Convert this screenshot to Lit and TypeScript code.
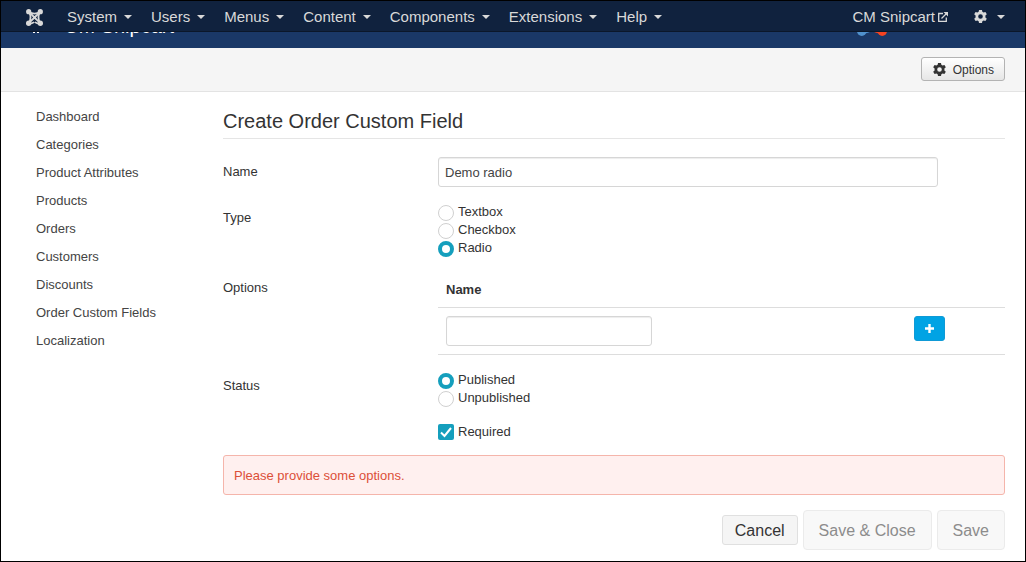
import { LitElement, html, svg, css } from "lit";
import { customElement, state } from "lit/decorators.js";

const GEAR =
  "M6.400 0h3.200l.4 2 1.300.8 2-.7 1.500 2.600-1.500 1.300v2l1.500 1.300-1.500 2.600-2-.7-1.300.8-.4 2H6.400l-.4-2-1.300-.8-2 .7L1.200 9.300 2.700 8V6L1.200 4.700 2.700 2.100l2 .7L6 2zM8 4.500a2.500 2.500 0 1 0 0 5 2.500 2.500 0 0 0 0-5z";

const gear = html`<svg class="gear" viewBox="1 0 14 14" aria-hidden="true">
  <path fill="currentColor" fill-rule="evenodd" d=${GEAR} />
</svg>`;

// Four knobs, one per corner, joined by interlaced links.
const joomla = (tl: string, tr: string, br: string, bl: string) => svg`
  <g fill="none" stroke-width="2.600">
    <path stroke=${tl} d="M4 4Q12 9 20 4M4 4L14 14" />
    <path stroke=${tr} d="M20 4Q15 12 20 20M20 4L10 14" />
    <path stroke=${br} d="M20.500 21Q15 20.500 12.500 18.500M20 20L10 10" />
    <path stroke=${bl} d="M3.500 21Q9 20.500 11.500 18.500M4 20Q9 12 4 4M4 20L14 10" />
  </g>
  <circle cx="3.800" cy="3.800" r="3.700" fill=${tl} />
  <circle cx="20.200" cy="3.800" r="3.700" fill=${tr} />
  <circle cx="20.200" cy="20.200" r="3.800" fill=${br} />
  <circle cx="3.800" cy="20.200" r="3.800" fill=${bl} />`;

@customElement("app-root")
export class AppRoot extends LitElement {
  @state() private fieldType = "Radio";
  @state() private status = "Published";

  static styles = css`
    :host {
      display: block;
      box-sizing: border-box;
      min-height: 100vh;
      border: 1px solid #000;
      background: #fff;
      color: #333;
      font: 13px/18px "Liberation Sans", Arial, sans-serif;
    }
    * { box-sizing: border-box; }
    a { color: inherit; text-decoration: none; }
    button, input { font: inherit; color: inherit; margin: 0; }
    svg { display: block; flex: none; }

    .navbar {
      position: relative;
      z-index: 1;
      display: flex;
      align-items: center;
      gap: 19px;
      height: 31px;
      padding: 2px 20px 0 25px;
      background: #10223e;
      border-bottom: 1px solid #0b172a;
      color: #d9d9d9;
      font-size: 15px;
    }
    .navbar a { display: flex; align-items: center; }
    .brand { margin-right: 5px; }
    .brand svg { width: 17px; height: 17px; }
    .caret {
      margin-left: 7px;
      border: 4px solid transparent;
      border-top-color: currentColor;
      border-bottom: 0;
    }
    .site { margin-left: auto; gap: 3px; }
    .site svg { width: 10px; height: 10px; }
    .settings { margin-left: 7px; gap: 3px; }
    .gear { width: 13px; height: 13px; }
    .settings .gear { margin-bottom: 2px; }

    .header {
      display: flex;
      justify-content: space-between;
      height: 47px;
      margin-top: -31px;
      padding: 5px 138px 0 30px;
      background: #1a3867;
      color: #fff;
    }
    .heading { display: flex; gap: 24px; padding-top: 10px; }
    .heading svg { width: 9px; height: 17px; }
    .heading h1 { margin: 0; font-size: 20px; line-height: 20px; font-weight: 400; }
    .logo { width: 30px; height: 30px; }

    .toolbar {
      display: flex;
      justify-content: flex-end;
      padding: 9px 20px 10px;
      background: #f5f5f5;
      border-bottom: 1px solid #e3e3e3;
    }
    .options {
      display: flex;
      align-items: center;
      gap: 7px;
      padding: 3px 10px 1px 11px;
      border: 1px solid #b3b3b3;
      border-radius: 3px;
      background: linear-gradient(#fff, #e6e6e6);
      font-size: 12px;
    }
    .options .gear { margin-bottom: 2px; }

    .page {
      display: grid;
      grid-template-columns: 187px minmax(0, 1fr);
      padding: 16px 20px 11px 35px;
    }
    .side { display: flex; flex-direction: column; gap: 10px; color: #444; }
    .page h2 {
      margin: 0 0 18px;
      padding: 1px 0 4px;
      border-bottom: 1px solid #e5e5e5;
      font-size: 20px;
      line-height: 25px;
      font-weight: 400;
    }
    .group {
      display: grid;
      grid-template-columns: 215px minmax(0, 1fr);
      margin: 0 0 16px;
      align-items: start;
    }
    .label { padding-top: 6px; }
    .text {
      display: block;
      width: 100%;
      height: 30px;
      padding: 4px 6px;
      border: 1px solid #d6d6d6;
      border-radius: 3px;
      background: #fff;
      box-shadow: inset 0 1px 1px rgba(0, 0, 0, 0.075);
      color: #444;
      outline: none;
    }
    .wide { max-width: 500px; }
    .short { width: 206px; }

    .choice { display: flex; align-items: center; gap: 4px; width: max-content; }
    .radio { align-items: flex-end; }
    .choice input {
      appearance: none;
      width: 16px;
      height: 16px;
      border: 1px solid #d0d0d0;
      border-radius: 50%;
      background: #fff;
    }
    .choice input:checked { border: 4px solid #159fbd; }
    .choice input[type="checkbox"] {
      grid-area: 1 / 1;
      border-radius: 2px;
    }
    .choice input[type="checkbox"]:checked { border: 0; background: #159fbd; }
    .box { display: grid; }
    .box svg { grid-area: 1 / 1; width: 16px; height: 16px; display: none; pointer-events: none; }
    .box input:checked + svg { display: block; }

    table { width: 100%; border-collapse: separate; border-spacing: 0; }
    th, td {
      padding: 8px;
      border-bottom: 1px solid #ddd;
      text-align: left;
      vertical-align: top;
    }
    .action { width: 99px; }
    .add {
      display: block;
      padding: 7px 10px;
      border: 1px solid #0f9ad6;
      border-radius: 3px;
      background: #00a3e4;
      color: #fff;
    }
    .add svg { width: 9px; height: 9px; }

    .alert {
      margin: -2px 0 15px;
      padding: 11px 10px 9px;
      border: 1px solid #f5b5ab;
      border-radius: 3px;
      background: #fff0ef;
      color: #dc4f38;
    }
    .actions { display: flex; justify-content: flex-end; align-items: center; gap: 5px; }
    .btn {
      padding: 6px 12px 4px;
      border: 1px solid #e0e0e0;
      border-radius: 3px;
      background: #f5f5f5;
      font-size: 16px;
    }
    .btn:disabled {
      padding: 11px 15px 9px;
      border-color: #ebebeb;
      border-radius: 4px;
      background: #f8f8f8;
      color: #8c8c8c;
    }
  `;

  private radios(name: string, values: string[], current: string, pick: (v: string) => void) {
    return values.map(
      (v) => html`<label class="choice radio">
        <input type="radio" name=${name} .checked=${v === current} @change=${() => pick(v)} />${v}
      </label>`
    );
  }

  render() {
    const menus = ["System", "Users", "Menus", "Content", "Components", "Extensions", "Help"];
    const links = [
      "Dashboard", "Categories", "Product Attributes", "Products", "Orders",
      "Customers", "Discounts", "Order Custom Fields", "Localization",
    ];
    const g = "#d9d9d9";
    return html`
      <nav class="navbar">
        <a class="brand" href="#" aria-label="Joomla">
          <svg viewBox="0 0 24 24">${joomla(g, g, g, g)}</svg>
        </a>
        ${menus.map((m) => html`<a href="#">${m}<span class="caret"></span></a>`)}
        <a class="site" href="#">CM Snipcart
          <svg viewBox="0 0 10 10" fill="none" stroke="currentColor" stroke-width="1.300">
            <path d="M5 1.500H.700v7.800h7.600V5.500M3.500 6.500 8.500 1.500" />
            <path d="M5.500 0H10v4.500z" fill="currentColor" stroke="none" />
          </svg>
        </a>
        <a class="settings" href="#" aria-label="Settings">${gear}<span class="caret"></span></a>
      </nav>
      <header class="header">
        <div class="heading">
          <svg viewBox="0 0 9 17" fill="#fff"><path d="M2 0h2v17H2zM6 0h2v17H6z" /></svg>
          <h1>CM Snipcart</h1>
        </div>
        <svg class="logo" viewBox="0 0 24 24">${joomla("#7ac143", "#fbb03b", "#f44321", "#5091cd")}</svg>
      </header>
      <div class="toolbar">
        <button class="options" type="button">${gear}Options</button>
      </div>
      <div class="page">
        <nav class="side">${links.map((l) => html`<a href="#">${l}</a>`)}</nav>
        <main>
          <h2>Create Order Custom Field</h2>
          <form @submit=${(e: Event) => e.preventDefault()}>
            <div class="group">
              <label class="label" for="name">Name</label>
              <input class="text wide" id="name" type="text" value="Demo radio" />
            </div>
            <div class="group" role="radiogroup" aria-labelledby="type">
              <span class="label" id="type">Type</span>
              <div>
                ${this.radios("type", ["Textbox", "Checkbox", "Radio"], this.fieldType, (v) => (this.fieldType = v))}
              </div>
            </div>
            <div class="group">
              <span class="label">Options</span>
              <table>
                <thead>
                  <tr><th id="option-name">Name</th><th class="action"></th></tr>
                </thead>
                <tbody>
                  <tr>
                    <td><input class="text short" type="text" aria-labelledby="option-name" /></td>
                    <td class="action">
                      <button class="add" type="button" aria-label="Add option">
                        <svg viewBox="0 0 9 9" fill="currentColor"><path d="M3.300 0h2.400v3.300H9v2.400H5.700V9H3.300V5.700H0V3.300h3.300z" /></svg>
                      </button>
                    </td>
                  </tr>
                </tbody>
              </table>
            </div>
            <div class="group" role="radiogroup" aria-labelledby="status">
              <span class="label" id="status">Status</span>
              <div>
                ${this.radios("status", ["Published", "Unpublished"], this.status, (v) => (this.status = v))}
              </div>
            </div>
            <div class="group">
              <span></span>
              <label class="choice">
                <span class="box">
                  <input type="checkbox" checked />
                  <svg viewBox="0 0 16 16" fill="none" stroke="#fff" stroke-width="2"><path d="M3 8.500 6.500 12 13 4" /></svg>
                </span>Required
              </label>
            </div>
            <div class="alert" role="alert">Please provide some options.</div>
            <div class="actions">
              <button class="btn" type="button">Cancel</button>
              <button class="btn" type="submit" disabled>Save &amp; Close</button>
              <button class="btn" type="submit" disabled>Save</button>
            </div>
          </form>
        </main>
      </div>
    `;
  }
}
